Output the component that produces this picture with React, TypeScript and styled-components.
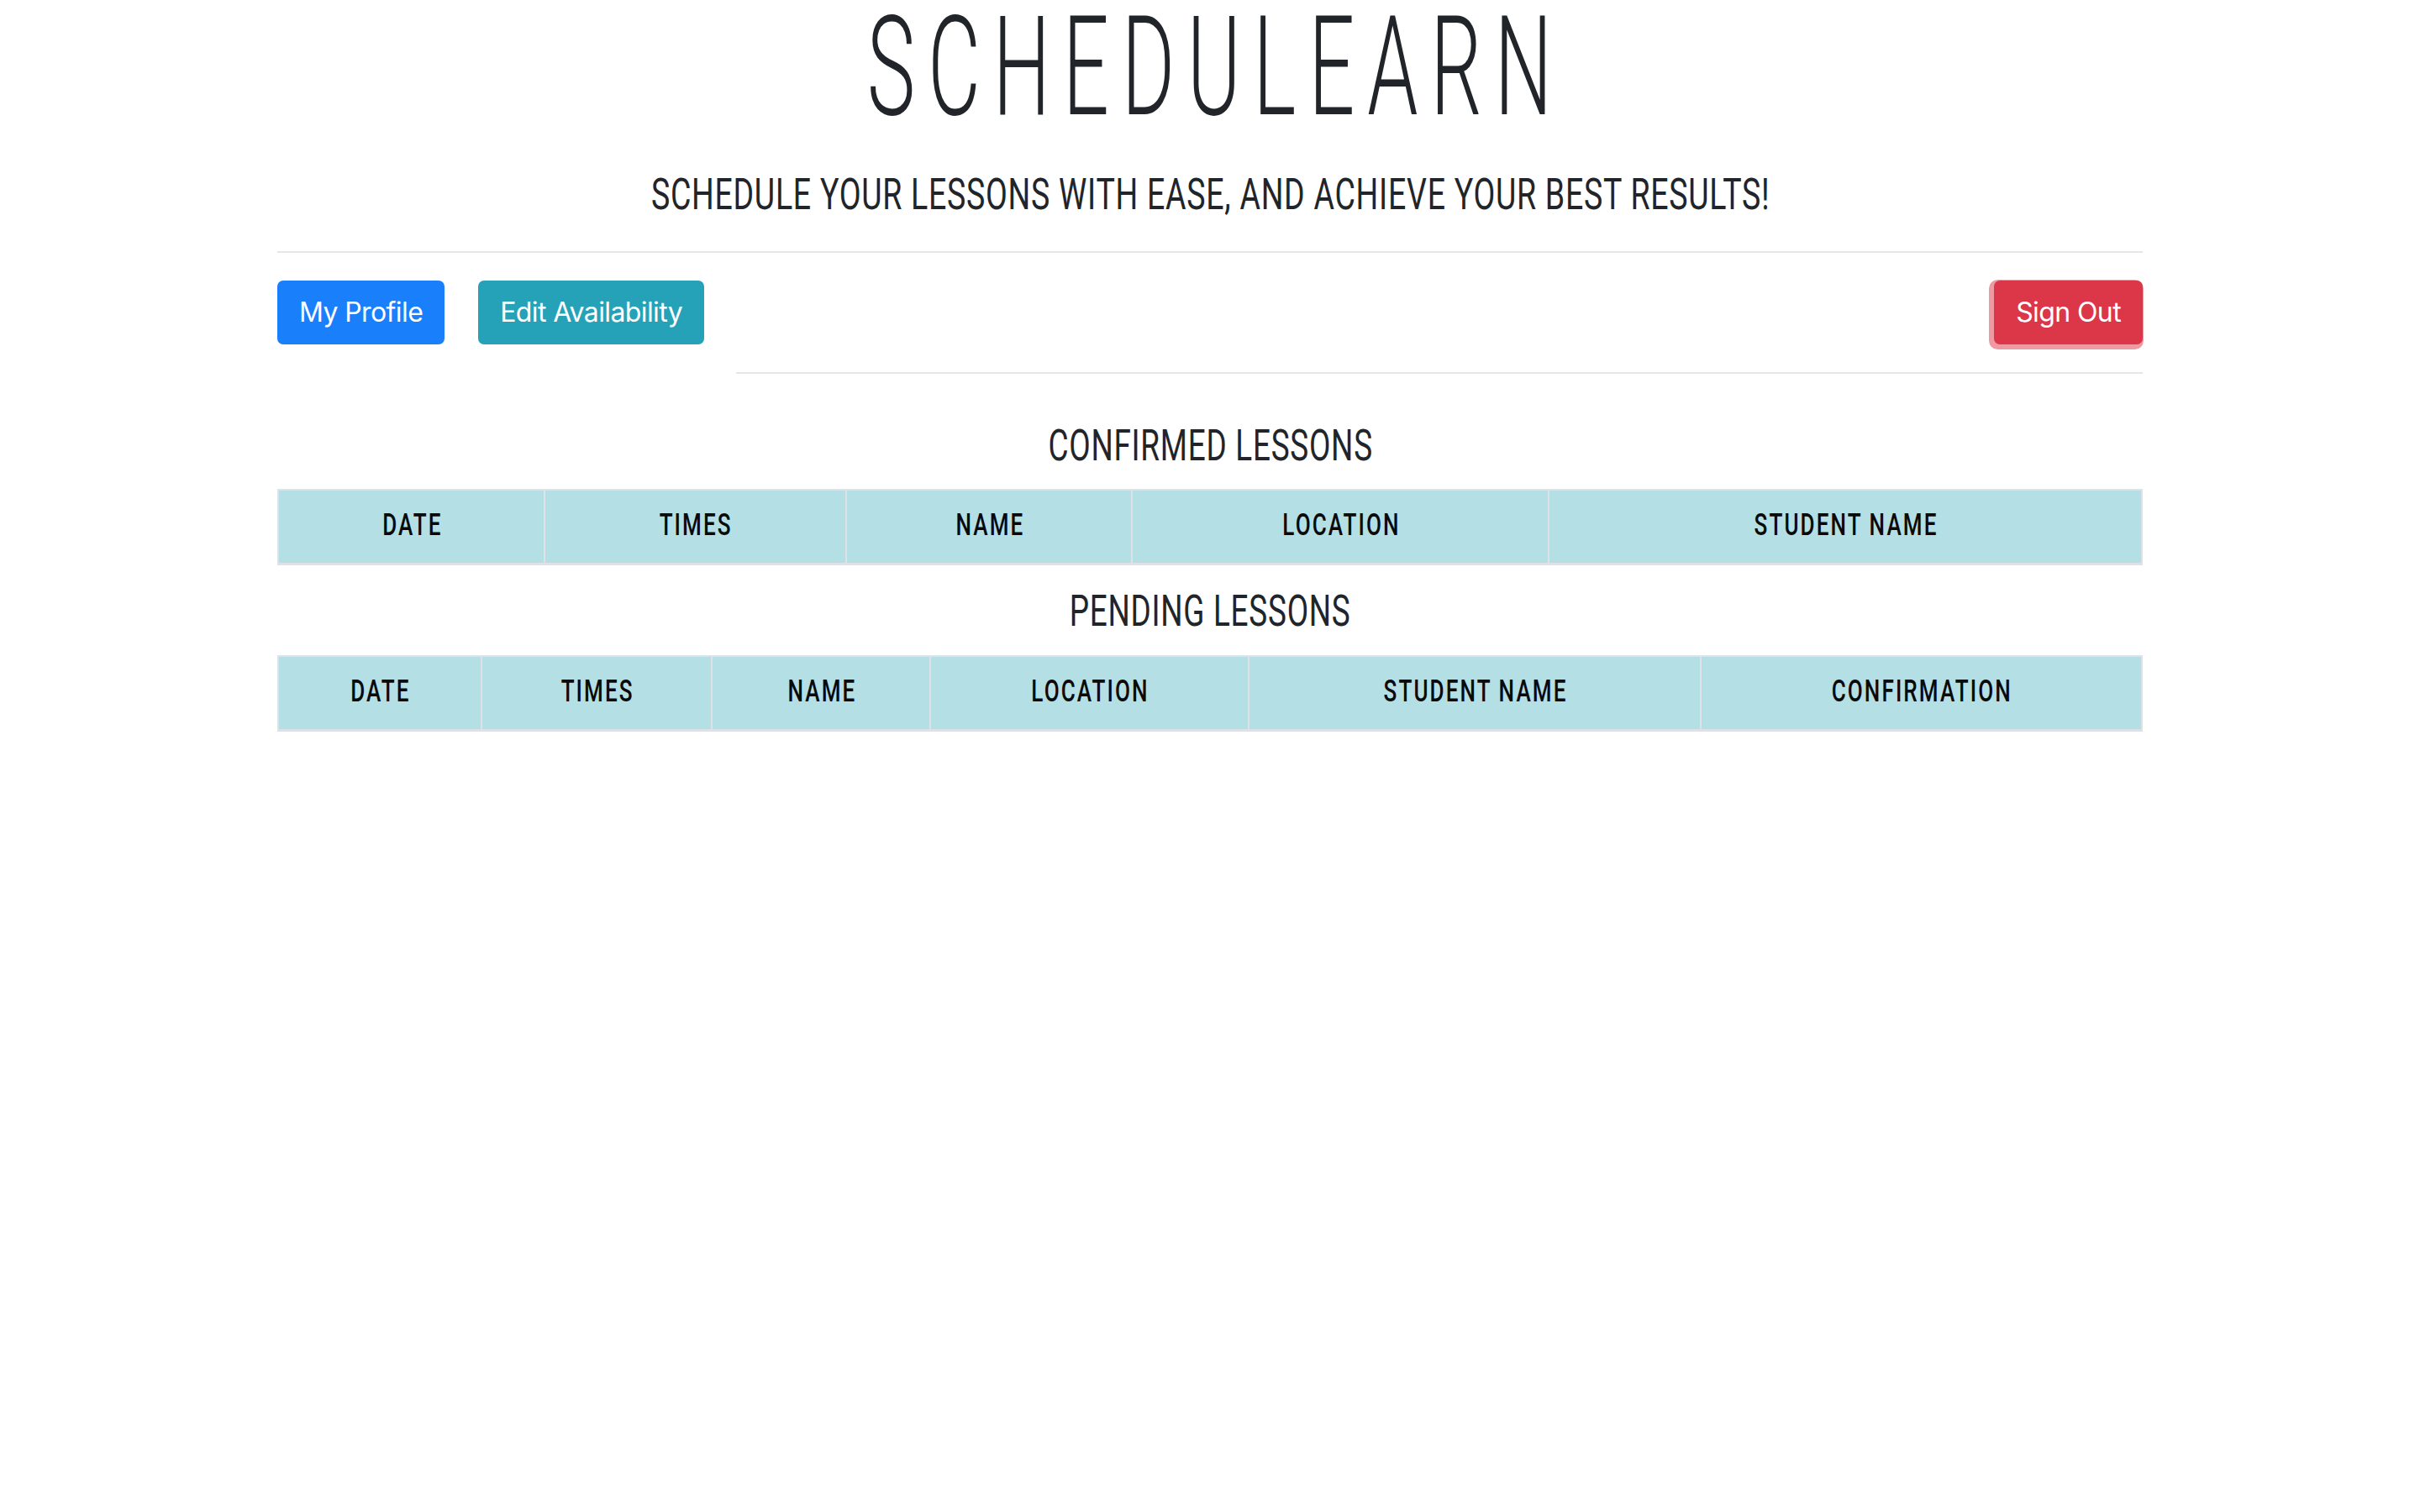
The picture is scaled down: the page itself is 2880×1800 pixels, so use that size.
import React from "react";
import styled, { createGlobalStyle } from "styled-components";

const Global = createGlobalStyle`
  html, body { margin: 0; padding: 0; background: #ffffff; }
  body { font-family: Roboto, "Liberation Sans", sans-serif; color: #212529; }
  * { box-sizing: border-box; }
`;

const Page = styled.main`
  width: 2220px;
  margin: 0 auto;
  display: flex;
  flex-direction: column;
`;

const Squeeze = styled.span<{ $k: number; $ls: number }>`
  display: inline-block;
  white-space: nowrap;
  letter-spacing: ${(p) => p.$ls}px;
  padding-left: ${(p) => p.$ls}px;
  transform: scaleX(${(p) => p.$k});
  transform-origin: center;
`;

const Title = styled.h1`
  margin: 0;
  font-family: Roboto, sans-serif;
  font-weight: 300;
  font-size: 166px;
  line-height: 160px;
  text-align: center;
  color: #212529;
`;

const Subtitle = styled.h2`
  margin: 46px 0 0;
  font-family: Roboto, sans-serif;
  font-weight: 400;
  font-size: 51px;
  line-height: 51px;
  text-align: center;
  color: #212529;
`;

const Rule = styled.hr<{ $top: number; $inset?: number }>`
  margin: ${(p) => p.$top}px 0 0 ${(p) => p.$inset ?? 0}px;
  border: 0;
  height: 2px;
  background: #e6e6e6;
`;

const Toolbar = styled.nav`
  margin-top: 33px;
  display: flex;
  align-items: center;
  gap: 40px;
`;

const Button = styled.button<{ $bg: string; $pressed?: boolean }>`
  font-family: Inter, "Noto Sans", sans-serif;
  font-size: 32px;
  line-height: 48px;
  letter-spacing: -0.6px;
  font-weight: 400;
  color: #ffffff;
  background: ${(p) => p.$bg};
  border: 2px solid ${(p) => p.$bg};
  border-radius: 7px;
  padding: 12px 24px;
  cursor: pointer;
  ${(p) =>
    p.$pressed
      ? `margin-left: auto; box-shadow: -2.5px 2.5px 0 3.5px rgba(220, 53, 69, 0.5);`
      : ""}
`;

const Heading = styled.h3<{ $top: number }>`
  margin: ${(p) => p.$top}px 0 0;
  font-family: Roboto, sans-serif;
  font-weight: 400;
  font-size: 51px;
  line-height: 51px;
  text-align: center;
  color: #212529;
`;

const Table = styled.table<{ $top: number }>`
  margin-top: ${(p) => p.$top}px;
  width: 2220px;
  table-layout: fixed;
  border-collapse: separate;
  border-spacing: 0;
  border-top: 2px solid #dee2e6;
  border-left: 2px solid #dee2e6;
`;

const HeadCell = styled.th`
  padding: 0 0 6px;
  height: 86px;
  line-height: 80px;
  background: #b4dfe5;
  border-right: 2px solid #dee2e6;
  border-bottom: 3px solid #dee2e6;
  font-family: Roboto, sans-serif;
  font-weight: 500;
  font-size: 37.5px;
  color: #0a0a0a;
  text-align: center;
  vertical-align: middle;
`;

type Col = { label: string; width: number };

const confirmed: Col[] = [
  { label: "DATE", width: 317 },
  { label: "TIMES", width: 359 },
  { label: "NAME", width: 340 },
  { label: "LOCATION", width: 496 },
  { label: "STUDENT NAME", width: 706 },
];

const pending: Col[] = [
  { label: "DATE", width: 242 },
  { label: "TIMES", width: 274 },
  { label: "NAME", width: 260 },
  { label: "LOCATION", width: 379 },
  { label: "STUDENT NAME", width: 538 },
  { label: "CONFIRMATION", width: 525 },
];

function LessonTable({ cols, top }: { cols: Col[]; top: number }) {
  return (
    <Table $top={top}>
      <colgroup>
        {cols.map((c) => (
          <col key={c.label} style={{ width: c.width }} />
        ))}
      </colgroup>
      <thead>
        <tr>
          {cols.map((c) => (
            <HeadCell key={c.label}>
              <Squeeze $k={0.695} $ls={3}>
                {c.label}
              </Squeeze>
            </HeadCell>
          ))}
        </tr>
      </thead>
      <tbody />
    </Table>
  );
}

export default function App() {
  return (
    <>
      <Global />
      <Page>
        <Title>
          <Squeeze $k={0.58} $ls={26}>
            SCHEDULEARN
          </Squeeze>
        </Title>
        <Subtitle>
          <Squeeze $k={0.735} $ls={1}>
            SCHEDULE YOUR LESSONS WITH EASE, AND ACHIEVE YOUR BEST RESULTS!
          </Squeeze>
        </Subtitle>
        <Rule $top={42} />
        <Toolbar>
          <Button $bg="#1a7ffb">My Profile</Button>
          <Button $bg="#25a2b7">Edit Availability</Button>
          <Button $bg="#db3749" $pressed>
            Sign Out
          </Button>
        </Toolbar>
        <Rule $top={33} $inset={546} />
        <Heading $top={60}>
          <Squeeze $k={0.724} $ls={1}>
            CONFIRMED LESSONS
          </Squeeze>
        </Heading>
        <LessonTable cols={confirmed} top={26} />
        <Heading $top={29}>
          <Squeeze $k={0.724} $ls={1}>
            PENDING LESSONS
          </Squeeze>
        </Heading>
        <LessonTable cols={pending} top={27} />
      </Page>
    </>
  );
}
